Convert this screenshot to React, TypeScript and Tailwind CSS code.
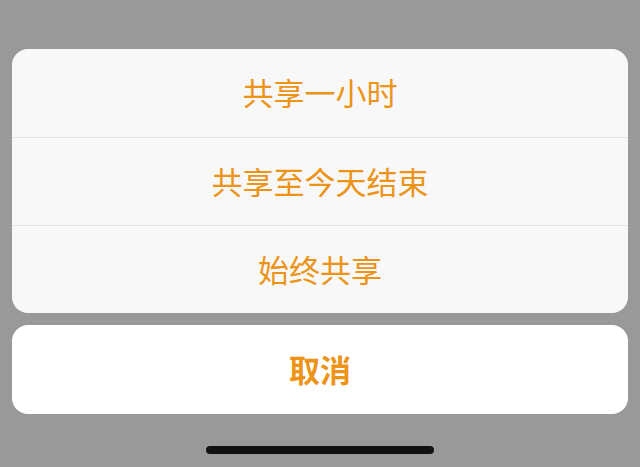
const OPTIONS = ['共享一小时', '共享至今天结束', '始终共享'];

const FONT = '[font-family:"Noto_Sans_CJK_SC","Noto_Sans",sans-serif]';

export default function App(): React.JSX.Element {
  return (
    <main className={`h-[467px] w-[640px] overflow-hidden bg-[#999999] ${FONT}`}>
      <div className="flex flex-col gap-3 px-3 pt-[49px]">
        {/* Options */}
        <div className="flex flex-col overflow-hidden rounded-[16px] bg-[#f8f8f8]">
          {OPTIONS.map((label, i) => (
            <button
              key={label}
              type="button"
              className={`flex h-[88px] items-center justify-center pb-[3px] text-[31px] leading-none text-[#ec9318] ${
                i > 0 ? 'border-t border-[#e2e2e2]' : ''
              }`}
            >
              {label}
            </button>
          ))}
        </div>

        {/* Cancel */}
        <button
          type="button"
          className="flex h-[89px] items-center justify-center rounded-[16px] bg-white pb-[3px] text-[31px] leading-none font-semibold text-[#ec9318]"
        >
          取消
        </button>
      </div>

      {/* Home indicator */}
      <div className="mt-[32px] flex justify-center">
        <div className="h-[8px] w-[228px] rounded-full bg-[#111111]" />
      </div>
    </main>
  );
}
